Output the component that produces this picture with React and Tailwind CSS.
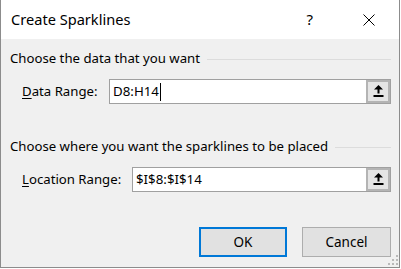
import React from "react";

function CollapseIcon() {
  return (
    <svg width="11" height="13" viewBox="0 0 11 13" className="block">
      <polygon points="5.5,0 1,4.5 10,4.5" fill="#000" />
      <rect x="4.5" y="4" width="2" height="4.5" fill="#000" />
      <rect x="0.5" y="10" width="10" height="2" fill="#000" />
    </svg>
  );
}

function RangeInput({ value, caret }) {
  return (
    <div className="flex-1 h-[25px] flex bg-white border border-[#a0a0a0]">
      <div className="flex-1 flex items-center pl-[3px] text-[13.3px] text-black leading-none">
        <span>{value}</span>
        {caret && <span className="inline-block w-px h-[18px] bg-black ml-[1px]" />}
      </div>
      <div className="w-[24px] h-full border-2 border-[#b4b4b4] bg-[#e5e5e5] flex items-center justify-center">
        <CollapseIcon />
      </div>
    </div>
  );
}

export default function App() {
  return (
    <div
      className="w-[401px] h-[269px] bg-white"
      style={{ fontFamily: '"Noto Sans", "Liberation Sans", sans-serif' }}
    >
      <div className="relative w-[400px] h-[268px] border-l border-r border-b border-[#8c8c8c] flex flex-col">
        <div className="h-[39px] bg-white flex items-center pl-[10px] shrink-0">
          <span className="text-[14.6px] text-black">Create Sparklines</span>
          <span className="ml-auto text-[15px] text-black mr-[50px]">?</span>
          <svg width="12" height="12" viewBox="0 0 12 12" className="mr-[24px]">
            <path d="M0.5 0.5 L11.5 11.5 M11.5 0.5 L0.5 11.5" stroke="#000" strokeWidth="1" />
          </svg>
        </div>
        <div className="flex-1 bg-[#f0f0f0] pt-[11px] pl-[9px] pr-[8px] flex flex-col">
          <div className="h-[18px] flex items-center gap-[7px]">
            <span className="text-[13.2px] text-black whitespace-nowrap">Choose the data that you want</span>
            <div className="flex-1 h-px bg-[#dcdcdc]" />
          </div>
          <div className="mt-[11px] flex items-center">
            <span className="w-[99px] pl-[12px] text-[13.2px] text-black">
              <span className="underline underline-offset-2">D</span>ata Range:
            </span>
            <RangeInput value="D8:H14" caret />
          </div>
          <div className="mt-[34px] h-[18px] flex items-center gap-[7px]">
            <span className="text-[13.2px] text-black whitespace-nowrap">Choose where you want the sparklines to be placed</span>
            <div className="flex-1 h-px bg-[#dcdcdc]" />
          </div>
          <div className="mt-[11px] flex items-center">
            <span className="w-[122px] pl-[12px] text-[13.2px] text-black">
              <span className="underline underline-offset-2">L</span>ocation Range:
            </span>
            <RangeInput value="$I$8:$I$14" />
          </div>
          <div className="mt-[35px] flex justify-end gap-[15px]">
            <button className="w-[88px] h-[30px] border-2 border-[#0078d7] bg-[#e1e1e1] text-[13.5px] text-black">
              OK
            </button>
            <button className="w-[89px] h-[30px] border border-[#adadad] bg-[#e1e1e1] text-[13.5px] text-black">
              Cancel
            </button>
          </div>
        </div>
        <div className="absolute right-[1px] bottom-[2px] w-[10px] h-[10px]">
          <div className="absolute right-0 top-0 w-[2px] h-[2px] bg-[#b9b9b9]" />
          <div className="absolute right-0 top-[4px] w-[2px] h-[2px] bg-[#b9b9b9]" />
          <div className="absolute right-[4px] top-[4px] w-[2px] h-[2px] bg-[#b9b9b9]" />
          <div className="absolute right-0 top-[8px] w-[2px] h-[2px] bg-[#b9b9b9]" />
          <div className="absolute right-[4px] top-[8px] w-[2px] h-[2px] bg-[#b9b9b9]" />
          <div className="absolute right-[8px] top-[8px] w-[2px] h-[2px] bg-[#b9b9b9]" />
        </div>
      </div>
    </div>
  );
}
